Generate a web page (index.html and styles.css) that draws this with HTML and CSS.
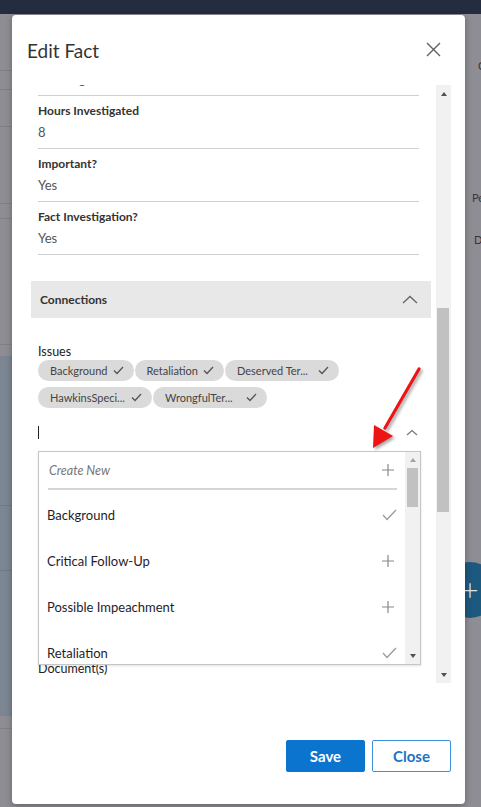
FILE: index.html
```html
<!DOCTYPE html>
<html lang="en">
<head>
  <meta charset="UTF-8" />
  <title>Edit Fact</title>
  <link rel="stylesheet" href="styles.css">
</head>
<body>
  <div class="topbar"></div>

  <div class="page">
    <div class="page-left">
      <div class="strip-row h56"></div>
      <div class="strip-row h18"></div>
      <div class="strip-row h36"></div>
      <div class="strip-row h76"></div>
      <div class="strip-row h14"></div>
      <div class="strip-row h125"></div>
      <div class="strip-row h11 no-line"></div>
      <div class="strip-row blue h149"></div>
      <div class="strip-row blue h64"></div>
      <div class="strip-row blue h144 no-line"></div>
      <div class="strip-row h12"></div>
    </div>
    <div class="page-main"></div>
    <div class="page-right">
      <span class="bg-text c">C</span>
      <span class="bg-text pe">Pe</span>
      <span class="bg-text d">D</span>
      <div class="fab">+</div>
    </div>
  </div>

  <div class="modal">
    <div class="modal-header">
      <h2>Edit Fact</h2>
      <svg class="close-x" width="15" height="15" viewBox="0 0 15 15">
        <path d="M1 1 L14 14 M14 1 L1 14" stroke="#5f5f5f" stroke-width="1.4" fill="none" />
      </svg>
    </div>

    <div class="modal-body">
      <div class="scroll-content">
        <div class="field field-partial">
          <div class="field-value">Meeting</div>
        </div>
        <div class="field">
          <div class="field-label">Hours Investigated</div>
          <div class="field-value">8</div>
        </div>
        <div class="field">
          <div class="field-label">Important?</div>
          <div class="field-value">Yes</div>
        </div>
        <div class="field">
          <div class="field-label">Fact Investigation?</div>
          <div class="field-value">Yes</div>
        </div>

        <div class="section-head">
          <span>Connections</span>
          <svg width="16" height="9" viewBox="0 0 16 9">
            <polyline points="1,8 8,1.5 15,8" stroke="#666" stroke-width="1.3" fill="none" />
          </svg>
        </div>

        <div class="issues">
          <div class="issues-label">Issues</div>
          <div class="tags">
            <span class="tag"><span class="tag-text">Background</span><svg class="tick" width="11" height="9" viewBox="0 0 11 9"><polyline points="1,4.5 4,7.5 10,1" /></svg></span>
            <span class="tag"><span class="tag-text">Retaliation</span><svg class="tick" width="11" height="9" viewBox="0 0 11 9"><polyline points="1,4.5 4,7.5 10,1" /></svg></span>
            <span class="tag"><span class="tag-text trunc">Deserved Ter...</span><svg class="tick" width="11" height="9" viewBox="0 0 11 9"><polyline points="1,4.5 4,7.5 10,1" /></svg></span>
            <span class="tag"><span class="tag-text trunc">HawkinsSpeci...</span><svg class="tick" width="11" height="9" viewBox="0 0 11 9"><polyline points="1,4.5 4,7.5 10,1" /></svg></span>
            <span class="tag"><span class="tag-text trunc">WrongfulTer...</span><svg class="tick" width="11" height="9" viewBox="0 0 11 9"><polyline points="1,4.5 4,7.5 10,1" /></svg></span>
          </div>
        </div>

        <div class="combo-row">
          <span class="caret"></span>
          <svg width="12" height="7" viewBox="0 0 12 7">
            <polyline points="1,6 6,1.5 11,6" stroke="#777" stroke-width="1.2" fill="none" />
          </svg>
        </div>

        <div class="dropdown">
          <div class="dd-list">
            <div class="dd-create">
              <span>Create New</span>
              <svg class="plus" width="12" height="12" viewBox="0 0 12 12"><path d="M6 0 V12 M0 6 H12" /></svg>
            </div>
            <div class="dd-items">
              <div class="dd-item">
                <span>Background</span>
                <svg class="check" width="15" height="12" viewBox="0 0 15 12"><polyline points="1,6 5,10.5 14,1" /></svg>
              </div>
              <div class="dd-item">
                <span>Critical Follow-Up</span>
                <svg class="plus" width="12" height="12" viewBox="0 0 12 12"><path d="M6 0 V12 M0 6 H12" /></svg>
              </div>
              <div class="dd-item">
                <span>Possible Impeachment</span>
                <svg class="plus" width="12" height="12" viewBox="0 0 12 12"><path d="M6 0 V12 M0 6 H12" /></svg>
              </div>
              <div class="dd-item">
                <span>Retaliation</span>
                <svg class="check" width="15" height="12" viewBox="0 0 15 12"><polyline points="1,6 5,10.5 14,1" /></svg>
              </div>
            </div>
          </div>
          <div class="dd-scroll">
            <div class="sb-btn"><span class="arrow-up light"></span></div>
            <div class="dd-thumb"></div>
            <div class="sb-fill"></div>
            <div class="sb-btn"><span class="arrow-down"></span></div>
          </div>
        </div>

        <div class="docs-label">Document(s)</div>
      </div>

      <div class="vscroll">
        <div class="sb-btn"><span class="arrow-up"></span></div>
        <div class="sb-fill top"></div>
        <div class="sb-thumb"></div>
        <div class="sb-fill"></div>
        <div class="sb-btn"><span class="arrow-down"></span></div>
      </div>
    </div>

    <div class="modal-footer">
      <button class="btn btn-primary">Save</button>
      <button class="btn btn-outline">Close</button>
    </div>
  </div>

  <svg class="annotation" width="481" height="807" viewBox="0 0 481 807">
    <line x1="419" y1="369" x2="385" y2="428" stroke="#ee1414" stroke-width="3.2" stroke-linecap="round" />
    <polygon points="373,448 374,425 393,436" fill="#ee1414" />
  </svg>
</body>
</html>
```

FILE: styles.css
```css
* {
  box-sizing: border-box;
}
html, body {
  margin: 0;
  padding: 0;
}
body {
  position: relative;
  width: 481px;
  height: 807px;
  overflow: hidden;
  background: #8e8d93;
  font-family: 'Lato', 'Noto Sans', sans-serif;
  color: #222;
}
.topbar {
  height: 14px;
  background: #232d3f;
}

/* dimmed page behind the dialog */
.page {
  display: flex;
  height: 793px;
}
.page-left {
  width: 12px;
  display: flex;
  flex-direction: column;
}
.strip-row {
  flex-shrink: 0;
  border-bottom: 1px solid #7f7f85;
}
.strip-row.no-line {
  border-bottom: none;
}
.strip-row.blue {
  background: #7b8692;
  border-bottom-color: #6f7a85;
}
.h11 { height: 11px; }
.h12 { height: 13px; }
.h14 { height: 15px; }
.h18 { height: 19px; }
.h36 { height: 37px; }
.h56 { height: 57px; }
.h64 { height: 65px; }
.h76 { height: 77px; }
.h125 { height: 126px; }
.h144 { height: 145px; }
.h149 { height: 150px; }
.page-main {
  flex: 1;
}
.page-right {
  position: relative;
  width: 16px;
  display: flex;
  flex-direction: column;
  font-size: 11px;
  color: #38363e;
}
.bg-text {
  white-space: nowrap;
  line-height: 14px;
}
.bg-text.c {
  margin: 45px 0 0 13px;
}
.bg-text.pe {
  margin: 118px 0 0 7px;
}
.bg-text.d {
  margin: 28px 0 0 9px;
  color: #3f2d42;
}
.fab {
  position: absolute;
  left: -23px;
  top: 548px;
  width: 56px;
  height: 56px;
  border-radius: 50%;
  background: #1d587f;
  color: #dfe6ec;
  font-size: 30px;
  line-height: 54px;
  text-align: center;
  font-weight: 300;
}

/* dialog */
.modal {
  position: absolute;
  left: 12px;
  top: 15px;
  width: 453px;
  height: 789px;
  background: #fff;
  border-radius: 4px;
  box-shadow: 0 2px 6px rgba(0, 0, 0, 0.3);
  display: flex;
  flex-direction: column;
}
.modal-header {
  height: 70px;
  flex-shrink: 0;
  display: flex;
  justify-content: space-between;
  align-items: flex-start;
  padding: 24px 24px 0 15px;
}
.modal-header h2 {
  margin: 0;
  font-size: 19px;
  line-height: 24px;
  font-weight: 400;
  color: #333;
}
.close-x {
  margin-top: 3px;
}
.modal-body {
  height: 598px;
  flex-shrink: 0;
  display: flex;
  margin: 0 14px 0 15px;
}
.scroll-content {
  flex: 1;
  overflow: hidden;
  padding: 0 17px 0 11px;
}
.field {
  padding: 4px 0;
  border-bottom: 1px solid #cfcfcf;
}
.field-partial {
  margin-top: -21px;
}
.field-label {
  font-size: 12px;
  line-height: 21px;
  font-weight: 700;
  color: #333;
}
.field-value {
  font-size: 13px;
  line-height: 23px;
  color: #555;
}
.section-head {
  margin: 26px -12px 0 -7px;
  height: 37px;
  background: #e8e8e8;
  display: flex;
  align-items: center;
  justify-content: space-between;
  padding: 0 13px 0 9px;
  font-size: 12px;
  font-weight: 700;
  color: #333;
}
.issues {
  margin-top: 26px;
}
.issues-label {
  font-size: 12.5px;
  line-height: 16px;
  color: #222;
}
.tags {
  display: flex;
  flex-wrap: wrap;
  gap: 6px 1px;
}
.tag {
  flex-shrink: 0;
  height: 21px;
  border-radius: 11px;
  background: #dadada;
  display: flex;
  align-items: center;
  gap: 5px;
  padding: 0 10px 0 12px;
  font-size: 11px;
  color: #444;
  white-space: nowrap;
}
.tag-text.trunc {
  width: 76px;
}
.tick polyline {
  stroke: #555;
  stroke-width: 1.3;
  fill: none;
}
.combo-row {
  margin-top: 12px;
  height: 25px;
  display: flex;
  align-items: center;
  justify-content: space-between;
  padding-right: 1px;
}
.caret {
  width: 1px;
  height: 13px;
  background: #222;
}
.dropdown {
  position: relative;
  z-index: 1;
  margin: 6px -2px 0 0;
  height: 214px;
  border: 1px solid #c6c6c6;
  background: #fff;
  display: flex;
  box-shadow: 0 1px 2px rgba(0, 0, 0, 0.12);
}
.dd-list {
  flex: 1;
  overflow: hidden;
}
.dd-create {
  height: 38px;
  margin: 0 8px 0 9px;
  border-bottom: 2px solid #d6d6d6;
  display: flex;
  align-items: center;
  justify-content: space-between;
  padding: 0 3px 0 1px;
  font-size: 12.5px;
  font-style: italic;
  color: #777;
}
.dd-items {
  padding-top: 2px;
}
.dd-item {
  height: 46px;
  display: flex;
  align-items: center;
  justify-content: space-between;
  padding: 0 8px;
  font-size: 13px;
  color: #1f1d2b;
}
.dd-item .plus {
  margin-right: 3px;
}
.plus path {
  stroke: #888;
  stroke-width: 1.2;
  fill: none;
}
.check polyline {
  stroke: #999;
  stroke-width: 1.2;
  fill: none;
}
.docs-label {
  margin-top: -4px;
  font-size: 12.5px;
  line-height: 16px;
  color: #222;
}

/* scrollbars */
.vscroll, .dd-scroll {
  width: 15px;
  flex-shrink: 0;
  display: flex;
  flex-direction: column;
  background: #f1f1f1;
}
.sb-btn {
  height: 17px;
  flex-shrink: 0;
  display: flex;
  align-items: center;
  justify-content: center;
}
.dd-scroll .sb-btn {
  height: 16px;
}
.sb-fill {
  flex: 1;
}
.sb-fill.top {
  flex: none;
  height: 206px;
}
.sb-thumb {
  height: 204px;
  margin: 0 2px 0 1px;
  background: #c1c1c1;
}
.dd-thumb {
  height: 39px;
  margin: 0 2px;
  background: #c1c1c1;
}
.arrow-up, .arrow-down {
  width: 0;
  height: 0;
  border-left: 3.5px solid transparent;
  border-right: 3.5px solid transparent;
}
.arrow-up {
  border-bottom: 4px solid #505050;
}
.arrow-up.light {
  border-bottom-color: #a3a3a3;
}
.arrow-down {
  border-top: 4px solid #505050;
}

.modal-footer {
  flex: 1;
  display: flex;
  justify-content: flex-end;
  align-items: flex-start;
  gap: 7px;
  padding: 57px 14px 0 0;
}
.btn {
  width: 79px;
  height: 32px;
  border-radius: 2px;
  font-family: 'Lato', 'Noto Sans', sans-serif;
  font-size: 15px;
  font-weight: 700;
  cursor: pointer;
}
.btn-primary {
  background: #0b74cf;
  border: 1px solid #0b74cf;
  color: #fff;
}
.btn-outline {
  background: #fff;
  border: 1px solid #3d8fdb;
  color: #1d73c4;
}

.annotation {
  position: absolute;
  left: 0;
  top: 0;
  z-index: 10;
  pointer-events: none;
  filter: drop-shadow(2px 2px 1.5px rgba(0, 0, 0, 0.35));
}
```
